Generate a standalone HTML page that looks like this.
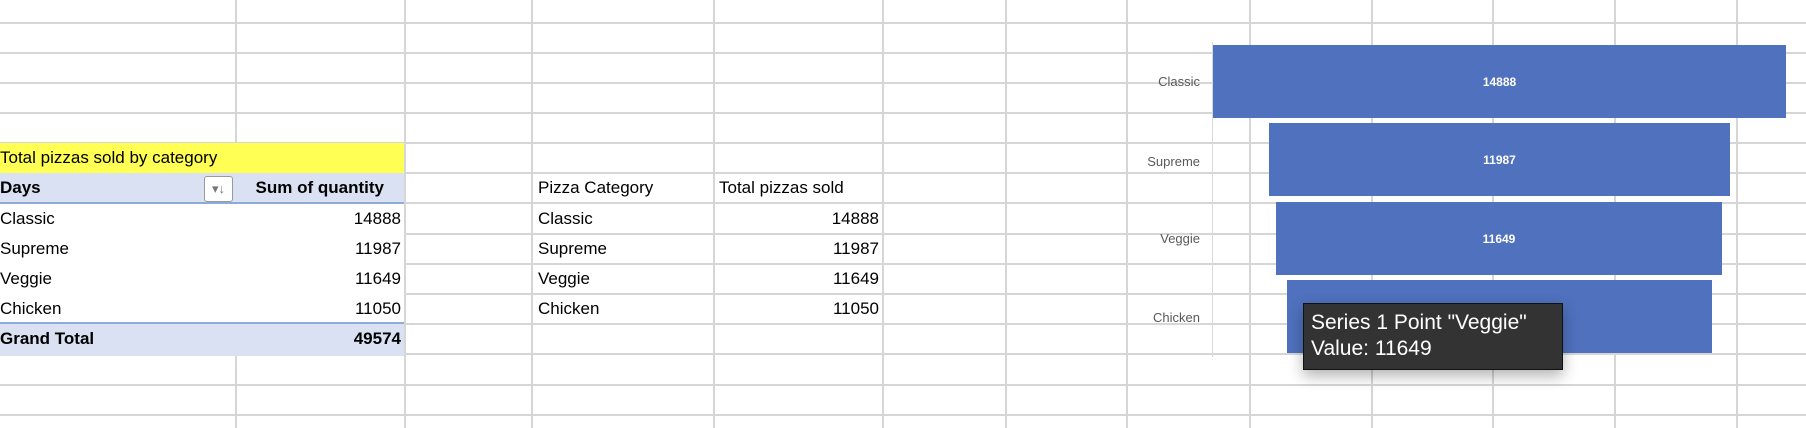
<!DOCTYPE html>
<html><head><style>
body{margin:0;width:1806px;height:428px;position:relative;overflow:hidden;background:#fff;font-family:"Liberation Sans",sans-serif;}
.v{position:absolute;top:0;height:428px;width:2px;background:#d6d6d6}
.h{position:absolute;left:0;width:1806px;height:2px;background:#d6d6d6}
.a{position:absolute;white-space:nowrap}
.c{position:absolute;font-size:17px;color:#000;line-height:30px;white-space:nowrap}
.r{text-align:right}
.bar{position:absolute;background:#4f71be;color:#fff;font-size:12px;font-weight:bold;display:flex;align-items:center;justify-content:center}
.lab{position:absolute;font-size:13px;color:#595959;text-align:right;width:100px}
</style></head><body>
<div class="h" style="top:22px"></div><div class="h" style="top:52px"></div><div class="h" style="top:82px"></div><div class="h" style="top:112px"></div><div class="h" style="top:142px"></div><div class="h" style="top:172px"></div><div class="h" style="top:202px"></div><div class="h" style="top:233px"></div><div class="h" style="top:263px"></div><div class="h" style="top:293px"></div><div class="h" style="top:323px"></div><div class="h" style="top:353px"></div><div class="h" style="top:384px"></div><div class="h" style="top:414px"></div>
<div class="v" style="left:235px"></div><div class="v" style="left:404px"></div><div class="v" style="left:531px"></div><div class="v" style="left:713px"></div><div class="v" style="left:882px"></div><div class="v" style="left:1005px"></div><div class="v" style="left:1126px"></div><div class="v" style="left:1249px"></div><div class="v" style="left:1371px"></div><div class="v" style="left:1492px"></div><div class="v" style="left:1614px"></div><div class="v" style="left:1736px"></div>

<div class="a" style="left:0;top:143px;width:404px;height:30px;background:#ffff54"></div>
<div class="c" style="left:0;top:143px">Total pizzas sold by category</div>
<div class="a" style="left:0;top:173px;width:404px;height:29px;background:#d9e1f2;border-bottom:2px solid #8eaadb"></div>
<div class="c" style="left:0;top:173px;font-weight:bold">Days</div>
<div class="a" style="left:204px;top:176px;width:27px;height:24px;border:1px solid #999;border-radius:3px;background:#fff;font-size:13px;color:#777;text-align:center;line-height:24px">▾↓</div>
<div class="c r" style="left:236px;width:148px;top:173px;font-weight:bold">Sum of quantity</div>
<div class="a" style="left:0;top:204px;width:404px;height:120px;background:#fff"></div>
<div class="c" style="left:0;top:204px">Classic</div><div class="c r" style="left:236px;width:165px;top:204px">14888</div>
<div class="c" style="left:0;top:234px">Supreme</div><div class="c r" style="left:236px;width:165px;top:234px">11987</div>
<div class="c" style="left:0;top:264px">Veggie</div><div class="c r" style="left:236px;width:165px;top:264px">11649</div>
<div class="c" style="left:0;top:294px">Chicken</div><div class="c r" style="left:236px;width:165px;top:294px">11050</div>
<div class="a" style="left:0;top:322px;width:404px;height:32px;background:#d9e1f2;border-top:2px solid #8eaadb"></div>
<div class="c" style="left:0;top:324px;font-weight:bold">Grand Total</div><div class="c r" style="left:236px;width:165px;top:324px;font-weight:bold">49574</div>

<div class="c" style="left:538px;top:173px">Pizza Category</div><div class="c" style="left:719px;top:173px">Total pizzas sold</div>
<div class="c" style="left:538px;top:204px">Classic</div><div class="c r" style="left:714px;width:165px;top:204px">14888</div>
<div class="c" style="left:538px;top:234px">Supreme</div><div class="c r" style="left:714px;width:165px;top:234px">11987</div>
<div class="c" style="left:538px;top:264px">Veggie</div><div class="c r" style="left:714px;width:165px;top:264px">11649</div>
<div class="c" style="left:538px;top:294px">Chicken</div><div class="c r" style="left:714px;width:165px;top:294px">11050</div>

<div class="a" style="left:1212px;top:42px;width:1px;height:315px;background:#d9d9d9"></div>
<div class="lab" style="left:1100px;top:74px">Classic</div>
<div class="lab" style="left:1100px;top:154px">Supreme</div>
<div class="lab" style="left:1100px;top:231px">Veggie</div>
<div class="lab" style="left:1100px;top:310px">Chicken</div>
<div class="bar" style="left:1213px;top:45px;width:573px;height:73px">14888</div>
<div class="bar" style="left:1269px;top:123px;width:461px;height:73px">11987</div>
<div class="bar" style="left:1276px;top:202px;width:446px;height:73px">11649</div>
<div class="bar" style="left:1287px;top:280px;width:425px;height:73px"></div>
<div class="a" style="left:1303px;top:303px;width:260px;height:67px;background:#333;border:1px solid #111;box-shadow:0 6px 14px rgba(0,0,0,.3);color:#fff;font-size:21px;line-height:26px;padding:6px 0 0 7px;box-sizing:border-box">Series 1 Point "Veggie"<br>Value: 11649</div>
</body></html>
